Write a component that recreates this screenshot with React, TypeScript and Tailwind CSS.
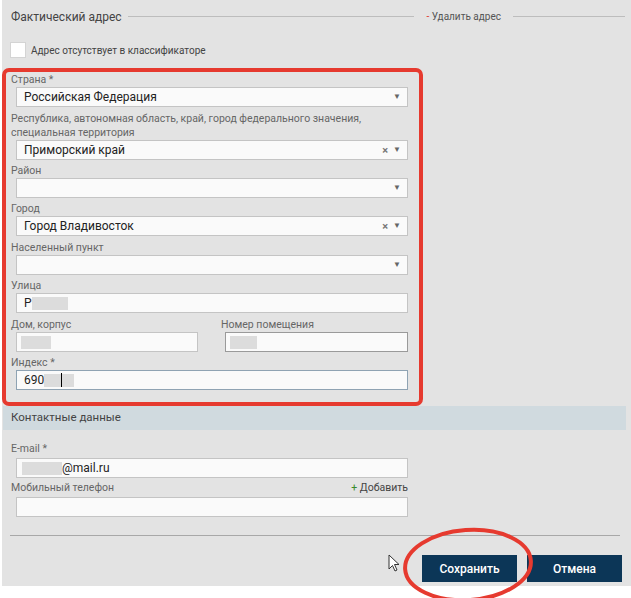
import type { ReactNode } from 'react';

const font = { fontFamily: 'Roboto, "Noto Sans", sans-serif' };

const Arrow = () => <span className="text-[8px] text-[#666] leading-none">▼</span>;

const Label = ({ children, className = '' }: { children: ReactNode; className?: string }) => (
  <div className={`text-[10.5px] leading-[14px] text-[#666] ${className}`}>{children}</div>
);

const Select = ({ value, clear = false }: { value?: string; clear?: boolean }) => (
  <div className="ml-[5px] flex h-[20px] w-[392px] items-center border border-[#c4c4c4] bg-[#fafafa] pl-[7px] pr-[6px]">
    <span className="flex-1 text-[12px] text-[#222]">{value}</span>
    {clear && <span className="mr-[5px] text-[11px] font-bold leading-none text-[#777]">×</span>}
    <Arrow />
  </div>
);

const Blur = ({ w }: { w: string }) => <span className={`inline-block h-[13px] bg-[#dcdcdc] ${w}`} />;

export default function App() {
  return (
    <div className="relative h-[598px] w-[631px] overflow-hidden bg-white" style={font}>
      <div className="ml-[2px] h-[586px] w-[629px] bg-[#e3e3e3]">
        {/* header */}
        <div className="flex h-[33px] items-center pl-[9px] pr-[6px]">
          <span className="text-[12px] text-[#444]">Фактический адрес</span>
          <div className="ml-[6px] h-px flex-1 bg-[#bdbdbd]" />
          <span className="mx-[12px] text-[10px] text-[#555]">
            <span className="text-[#e03a2f]">-</span> Удалить адрес
          </span>
          <div className="h-px w-[112px] bg-[#bdbdbd]" />
        </div>

        <div className="mt-[9px] flex items-center pl-[8px]">
          <div className="h-[16px] w-[16px] border border-[#d4d4d4] bg-white" />
          <span className="ml-[5px] text-[10px] text-[#444]">Адрес отсутствует в классификаторе</span>
        </div>

        {/* address fields */}
        <div className="mt-[10px] w-[421px] rounded-[7px] border-4 border-[#e63a2f] pb-[12px] pl-[5px] pt-px">
          <Label>Страна *</Label>
          <Select value="Российская Федерация" />

          <Label className="mt-[5px]">
            Республика, автономная область, край, город федерального значения,
            <br />
            специальная территория
          </Label>
          <Select value="Приморский край" clear />

          <Label className="mt-[4px]">Район</Label>
          <Select />

          <Label className="mt-[4px]">Город</Label>
          <Select value="Город Владивосток" clear />

          <Label className="mt-[5px]">Населенный пункт</Label>
          <Select />

          <Label className="mt-[4px]">Улица</Label>
          <div className="ml-[5px] flex h-[20px] w-[392px] items-center border border-[#c4c4c4] bg-[#fafafa] pl-[7px] text-[12px] text-[#222]">
            Р<Blur w="w-[36px]" />
          </div>

          <div className="mt-[5px] flex">
            <div>
              <Label>Дом, корпус</Label>
              <div className="ml-[5px] flex h-[20px] w-[182px] items-center border border-[#c4c4c4] bg-[#fafafa] pl-[4px]">
                <Blur w="w-[30px]" />
              </div>
            </div>
            <div className="ml-[23px]">
              <Label>Номер помещения</Label>
              <div className="ml-[4px] flex h-[20px] w-[183px] items-center border border-[#9a9a9a] bg-[#fafafa] pl-[4px]">
                <Blur w="w-[27px]" />
              </div>
            </div>
          </div>

          <Label className="mt-[4px]">Индекс *</Label>
          <div className="ml-[5px] flex h-[20px] w-[392px] items-center border border-[#8fa3b3] bg-[#fafafa] pl-[7px] text-[12px] text-[#222]">
            690<Blur w="w-[30px]" />
            <span className="-ml-[13px] h-[14px] w-px bg-black" />
          </div>
        </div>

        {/* contacts */}
        <div className="ml-px flex h-[24px] w-[623px] items-center bg-[#d0dadf] pl-[8px]">
          <span className="text-[11.5px] text-[#444]">Контактные данные</span>
        </div>

        <div className="pl-[9px]">
          <Label className="mt-[12px]">E-mail *</Label>
          <div className="ml-[5px] mt-[2px] flex h-[20px] w-[392px] items-center border border-[#c4c4c4] bg-[#fafafa] pl-[5px] text-[12px] text-[#222]">
            <Blur w="w-[40px]" />@mail.ru
          </div>

          <div className="mt-[3px] flex w-[397px] items-end justify-between">
            <Label>Мобильный телефон</Label>
            <span className="text-[10.5px] leading-[14px] text-[#444]">
              <span className="text-[#3a8a2a]">+</span> Добавить
            </span>
          </div>
          <div className="ml-[5px] mt-[2px] h-[20px] w-[392px] border border-[#c4c4c4] bg-[#fafafa]" />
        </div>

        <div className="ml-[8px] mt-[18px] h-px w-[610px] bg-[#a8a8a8]" />

        <div className="mt-[19px] flex justify-end gap-[10px] pr-[9px]">
          <button className="h-[27px] w-[95px] bg-[#0c3657] text-[12px] font-medium text-white">Сохранить</button>
          <button className="h-[27px] w-[95px] bg-[#0c3657] text-[12px] font-medium text-white">Отмена</button>
        </div>
      </div>

      {/* annotation ellipse */}
      <svg className="absolute left-[400px] top-[524px]" width="140" height="80" viewBox="0 0 140 80">
        <ellipse cx="68" cy="41" rx="63" ry="35" fill="none" stroke="#e63a2f" strokeWidth="4" transform="rotate(-4 68 41)" />
      </svg>

      {/* mouse cursor */}
      <svg className="absolute left-[388px] top-[554px]" width="12" height="19" viewBox="0 0 12 19">
        <path d="M1 1 L1 15 L4.5 11.5 L7 17 L9 16 L6.5 10.5 L11 10.5 Z" fill="white" stroke="#333" strokeWidth="1" />
      </svg>
    </div>
  );
}
